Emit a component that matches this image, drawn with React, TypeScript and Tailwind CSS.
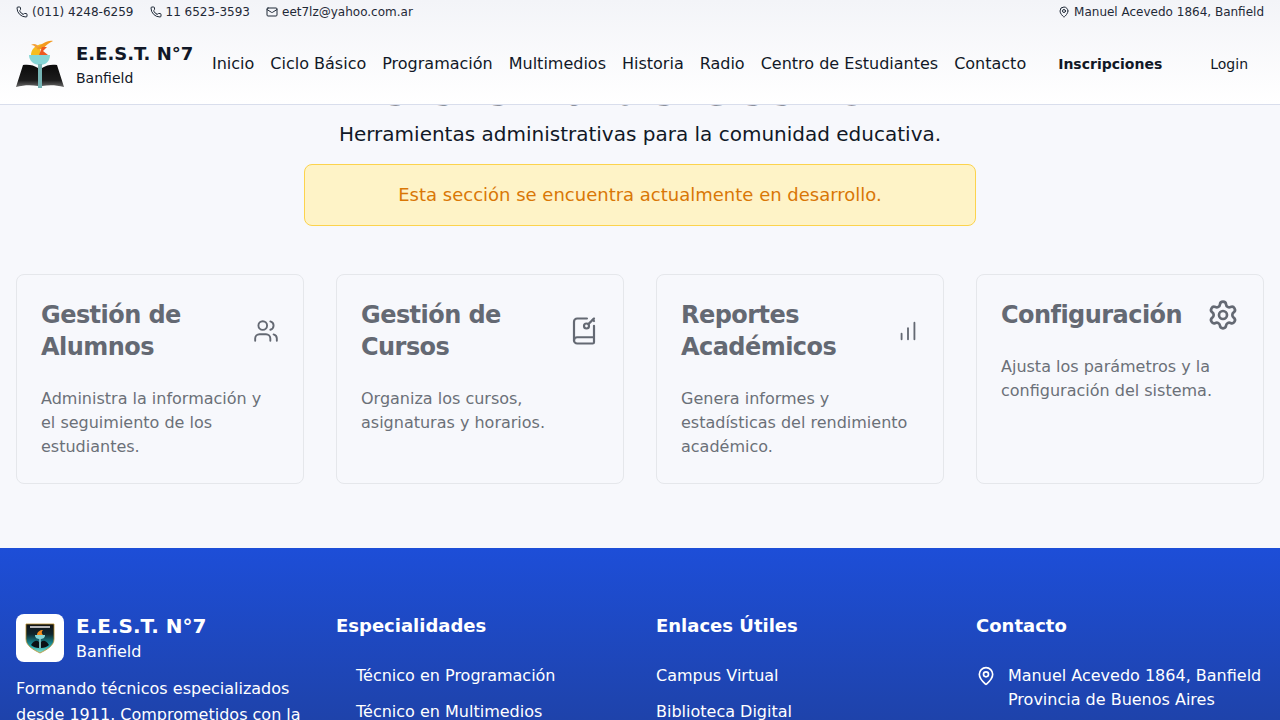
import {
  Phone,
  Mail,
  MapPin,
  Users,
  BookKey,
  ChartNoAxesColumnIncreasing,
  Settings,
} from "lucide-react";

const navLinks = [
  "Inicio",
  "Ciclo Básico",
  "Programación",
  "Multimedios",
  "Historia",
  "Radio",
  "Centro de Estudiantes",
  "Contacto",
];

const cards = [
  {
    title: "Gestión de Alumnos",
    text: "Administra la información y el seguimiento de los estudiantes.",
    icon: <Users className="w-[26px] h-[26px] shrink-0" strokeWidth={1.75} />,
  },
  {
    title: "Gestión de Cursos",
    text: "Organiza los cursos, asignaturas y horarios.",
    icon: <BookKey className="w-[30px] h-[30px] shrink-0" strokeWidth={1.75} />,
  },
  {
    title: "Reportes Académicos",
    text: "Genera informes y estadísticas del rendimiento académico.",
    icon: <ChartNoAxesColumnIncreasing className="w-[22px] h-[22px] shrink-0" strokeWidth={2} />,
  },
  {
    title: "Configuración",
    text: "Ajusta los parámetros y la configuración del sistema.",
    icon: <Settings className="w-8 h-8 shrink-0" strokeWidth={2} />,
  },
];

const Logo = () => (
  <svg viewBox="0 0 48 48" className="w-12 h-12 shrink-0">
    <defs>
      <linearGradient id="pageGrad" x1="0" y1="0" x2="0" y2="1">
        <stop offset="0" stopColor="#0b0b0b" />
        <stop offset="0.7" stopColor="#1c1c1c" />
        <stop offset="1" stopColor="#6a6a6a" />
      </linearGradient>
    </defs>
    <path d="M15 15 C15 10 19 5 26 4 C24 8 24 11 24 15 Z" fill="#f7bd1e" />
    <path d="M15 5 C18 3 21 4 24 8 L22 10 C20 7 18 5 15 5 Z" fill="#f2a03a" />
    <path d="M21 9 C25 4 31 0 37 1 C33 3 30 5 27 9 Z" fill="#f39a1f" />
    <path d="M23 15 L26 7 L31 7 L27 11 L32 15 Z" fill="#ee5a22" />
    <path d="M13 15 H34 C34 21 30 25 24 25 C18 25 13 21 13 15 Z" fill="#86d6d6" />
    <path d="M7 25 C12 24 18 25 22 28 V46 C15 45 8 45 0 47 Z" fill="url(#pageGrad)" />
    <path d="M41 25 C36 24 30 25 26 28 V46 C33 45 40 45 48 47 Z" fill="url(#pageGrad)" />
    <rect x="22" y="24" width="4" height="24" fill="#76b5b5" />
  </svg>
);

const Shield = () => (
  <svg viewBox="0 0 30 31" className="w-[30px] h-[31px]">
    <defs>
      <linearGradient id="shieldGrad" x1="0" y1="0" x2="0" y2="1">
        <stop offset="0" stopColor="#111315" />
        <stop offset="0.35" stopColor="#10262c" />
        <stop offset="0.75" stopColor="#1aa3ad" />
        <stop offset="1" stopColor="#8fe0c8" />
      </linearGradient>
    </defs>
    <path d="M1 1 H29 V16 C29 23 21 27 15 30 C9 27 1 23 1 16 Z" fill="url(#shieldGrad)" stroke="#b58b2a" strokeWidth="0.8" />
    <rect x="5" y="3" width="20" height="2" fill="#b9b9b9" />
    <path d="M6 22 C9 17 12 17 14 19 V25 C11 25 8 24 6 22 Z" fill="#0c1013" />
    <path d="M24 22 C21 17 18 17 16 19 V25 C19 25 22 24 24 22 Z" fill="#0c1013" />
    <rect x="14" y="14" width="2" height="11" fill="#76b5b5" />
    <path d="M10 12 H20 C20 15 18 16 15 16 C12 16 10 15 10 12 Z" fill="#86d6d6" />
    <path d="M12 12 C12 9 15 7 18 7 C16 9 17 11 18 12 Z" fill="#f28a1e" />
  </svg>
);

export default function App() {
  return (
    <div
      className="h-screen overflow-hidden bg-[#f7f8fc] text-[#111827]"
      style={{ fontFamily: '"DejaVu Sans", sans-serif' }}
    >
      <header className="relative z-10 h-[105px] border-b border-[#d9deec] bg-gradient-to-b from-[#f3f4f8] to-white">
        <div className="flex items-center justify-between h-6 px-4 text-xs text-[#1f2937]">
          <div className="flex items-center gap-4">
            <span className="flex items-center gap-1">
              <Phone className="w-3 h-3" /> (011) 4248-6259
            </span>
            <span className="flex items-center gap-1">
              <Phone className="w-3 h-3" /> 11 6523-3593
            </span>
            <span className="flex items-center gap-1">
              <Mail className="w-3 h-3" /> eet7lz@yahoo.com.ar
            </span>
          </div>
          <span className="flex items-center gap-1">
            <MapPin className="w-3 h-3" /> Manuel Acevedo 1864, Banfield
          </span>
        </div>

        <div className="flex items-center h-20 px-4">
          <Logo />
          <div className="ml-3 w-[136px] shrink-0">
            <div className="text-lg font-bold leading-7">E.E.S.T. N°7</div>
            <div className="text-sm leading-5">Banfield</div>
          </div>
          <nav className="flex items-center gap-4">
            {navLinks.map((link) => (
              <a key={link} className="text-base leading-6">
                {link}
              </a>
            ))}
          </nav>
          <a className="ml-8 text-sm font-bold">Inscripciones</a>
          <a className="ml-12 text-sm">Login</a>
        </div>
      </header>

      <main className="relative -mt-[41px]">
        <div className="flex flex-col items-center">
          <h1 className="text-5xl leading-[48px] font-bold text-[#374151]">Sistema de Gestión</h1>
          <p className="mt-2 text-xl leading-7 text-[#111827]">
            Herramientas administrativas para la comunidad educativa.
          </p>
          <div className="mt-4 w-[672px] h-[62px] flex items-center justify-center rounded-lg border border-[#fcd34d] bg-[#fef3c7] text-lg text-[#d97706]">
            Esta sección se encuentra actualmente en desarrollo.
          </div>
        </div>

        <div className="grid grid-cols-4 gap-8 px-4 mt-12">
          {cards.map((card) => (
            <div
              key={card.title}
              className="h-[210px] rounded-lg border border-[#e5e7eb] bg-[#f7f8fc] p-6 text-[#646973]"
            >
              <div className="flex items-center justify-between gap-4">
                <h3 className="text-2xl leading-8 font-bold tracking-[-0.55px]">{card.title}</h3>
                {card.icon}
              </div>
              <p className="mt-6 text-base leading-6 text-[#6b7078]">{card.text}</p>
            </div>
          ))}
        </div>

        <footer className="mt-16 h-[300px] bg-gradient-to-b from-[#1d4ed8] to-[#1e3a8a] px-4 pt-[66px] text-white">
          <div className="grid grid-cols-4 gap-8">
            <div>
              <div className="flex items-center gap-3 h-12">
                <div className="flex items-center justify-center w-12 h-12 rounded-lg bg-white">
                  <Shield />
                </div>
                <div>
                  <div className="text-xl font-bold leading-7">E.E.S.T. N°7</div>
                  <div className="text-base leading-6">Banfield</div>
                </div>
              </div>
              <p className="mt-[14px] text-base leading-relaxed">
                Formando técnicos especializados desde 1911. Comprometidos con la excelencia educativa.
              </p>
            </div>
            <div>
              <h4 className="text-lg font-bold leading-6">Especialidades</h4>
              <ul className="mt-[26px] space-y-3 pl-5">
                <li className="leading-6">Técnico en Programación</li>
                <li className="leading-6">Técnico en Multimedios</li>
              </ul>
            </div>
            <div>
              <h4 className="text-lg font-bold leading-6">Enlaces Útiles</h4>
              <ul className="mt-[26px] space-y-3">
                <li className="leading-6">Campus Virtual</li>
                <li className="leading-6">Biblioteca Digital</li>
              </ul>
            </div>
            <div>
              <h4 className="text-lg font-bold leading-6">Contacto</h4>
              <div className="flex gap-3 mt-[26px]">
                <MapPin className="w-5 h-5 shrink-0 mt-0.5" />
                <div className="leading-6">
                  Manuel Acevedo 1864, Banfield
                  <br />
                  Provincia de Buenos Aires
                </div>
              </div>
            </div>
          </div>
        </footer>
      </main>
    </div>
  );
}
